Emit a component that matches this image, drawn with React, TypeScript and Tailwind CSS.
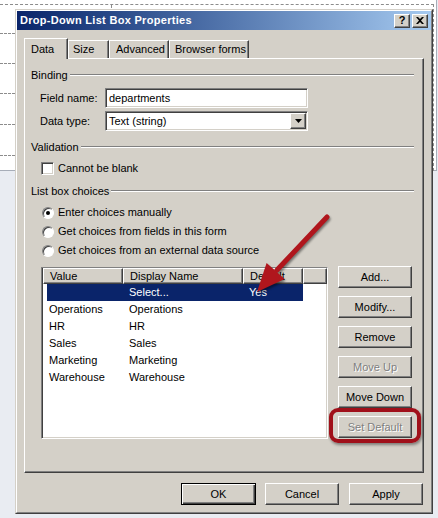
import type { ReactNode } from "react";

const raised =
  "border border-t-white border-l-white border-b-[#404040] border-r-[#404040] shadow-[inset_-1px_-1px_0_#808080]";
const sunken =
  "border border-t-[#808080] border-l-[#808080] border-b-white border-r-white shadow-[inset_1px_1px_0_#404040,inset_-1px_-1px_0_#d4d0c8]";

const rows: [string, string, string][] = [
  ["", "Select...", "Yes"],
  ["Operations", "Operations", ""],
  ["HR", "HR", ""],
  ["Sales", "Sales", ""],
  ["Marketing", "Marketing", ""],
  ["Warehouse", "Warehouse", ""],
];

function Group({ label, className = "" }: { label: string; className?: string }) {
  return (
    <div className={`ml-[6px] mr-[9px] flex h-[14px] items-center gap-[2px] ${className}`}>
      <span>{label}</span>
      <div className="h-[2px] flex-1 border-t border-b border-t-[#808080] border-b-white" />
    </div>
  );
}

function Btn({ children, disabled, className = "" }: { children: ReactNode; disabled?: boolean; className?: string }) {
  return (
    <button
      type="button"
      className={`flex h-[22px] w-[74px] items-center justify-center bg-[#d4d0c8] ${raised} ${
        disabled ? "text-[#808080] [text-shadow:1px_1px_0_#fff]" : ""
      } ${className}`}
    >
      {children}
    </button>
  );
}

function Radio({ checked, label }: { checked?: boolean; label: string }) {
  return (
    <div className="ml-[17px] flex h-[19px] items-center gap-[4px]">
      <span className="flex h-[12px] w-[12px] items-center justify-center rounded-full border border-t-[#808080] border-l-[#808080] border-b-white border-r-white bg-white shadow-[inset_1px_1px_0_#404040]">
        {checked && <span className="h-[4px] w-[4px] rounded-full bg-black" />}
      </span>
      <span>{label}</span>
    </div>
  );
}

function Tab({ label, active, className = "" }: { label: string; active?: boolean; className?: string }) {
  if (active)
    return (
      <div
        className={`relative z-10 mb-[-1px] flex h-[21px] items-start border-t border-l border-r border-t-white border-l-white border-r-[#404040] bg-[#d4d0c8] pt-[4px] shadow-[inset_-1px_0_0_#808080] ${className}`}
      >
        {label}
      </div>
    );
  return (
    <div
      className={`flex h-[18px] items-start border-t border-l border-r border-t-white border-l-white border-r-[#404040] bg-[#d4d0c8] pt-[2px] shadow-[inset_-1px_0_0_#808080] ${className}`}
    >
      {label}
    </div>
  );
}

export default function App() {
  return (
    <div className="relative h-[518px] w-[438px] overflow-hidden bg-[#e9ecf2] font-['Liberation_Sans',Arial,sans-serif] text-[11px] leading-[13px] text-black">
      {/* form canvas behind the dialog */}
      <div className="relative h-[171px] w-[437px] border-r border-b border-[#a7adb8] bg-white">
        <div className="absolute left-0 top-[4px] w-[434px] border-t border-dashed border-[#8c8c8c]" />
        <div className="absolute left-[111px] top-[4px] h-[4px] border-l border-[#8c8c8c]" />
        <div className="absolute left-[433px] top-[4px] h-[167px] border-l border-dashed border-[#8c8c8c]" />
        <div className="absolute left-0 top-[33px] w-[15px] border-t border-dashed border-[#8c8c8c]" />
        <div className="absolute left-0 top-[63px] w-[15px] border-t border-dashed border-[#8c8c8c]" />
        <div className="absolute left-0 top-[93px] w-[15px] border-t border-dashed border-[#8c8c8c]" />
        <div className="absolute left-0 top-[124px] w-[15px] border-t border-dashed border-[#8c8c8c]" />
        <div className="absolute left-0 top-[155px] w-[15px] border-t border-dashed border-[#8c8c8c]" />
      </div>

      {/* dialog window */}
      <div className="absolute left-[15px] top-[9px] h-[505px] w-[418px] border border-t-[#d4d0c8] border-l-[#d4d0c8] border-b-[#404040] border-r-[#404040]">
        <div className="flex h-full flex-col border border-t-white border-l-white border-b-[#808080] border-r-[#808080] bg-[#d4d0c8]">
          <div className="flex h-[19px] items-center bg-linear-to-r from-[#0a246a] to-[#a6caf0] pl-[3px] pr-[3px]">
            <span className="flex-1 font-bold tracking-[0.3px] text-white">Drop-Down List Box Properties</span>
            <span className={`flex h-[14px] w-[16px] items-center justify-center bg-[#d4d0c8] text-[11px] font-bold ${raised}`}>
              ?
            </span>
            <span className={`ml-[2px] flex h-[14px] w-[16px] items-center justify-center bg-[#d4d0c8] ${raised}`}>
              <svg width="8" height="7" viewBox="0 0 8 7">
                <path d="M0 0h2l2 2 2-2h2L5 3.5 8 7H6L4 5 2 7H0l3-3.5z" fill="#000" />
              </svg>
            </span>
          </div>

          <div className="px-[7px] pt-[7px]">
            <div className="flex h-[21px] items-end">
              <Tab label="Data" active className="w-[44px] pl-[6px]" />
              <Tab label="Size" className="w-[41px] pl-[4px]" />
              <Tab label="Advanced" className="w-[60px] pl-[6px]" />
              <Tab label="Browser forms" className="w-[80px] pl-[5px]" />
            </div>

            <div className="flex h-[415px] flex-col border border-t-white border-l-white border-b-[#404040] border-r-[#404040] shadow-[inset_-1px_-1px_0_#808080]">
              <Group label="Binding" className="mt-[9px]" />
              <div className="ml-[15px] mt-[6px] flex h-[20px] items-center">
                <span className="w-[65px]">Field name:</span>
                <div className={`flex h-[20px] w-[203px] items-center bg-white pl-[3px] ${sunken}`}>departments</div>
              </div>
              <div className="ml-[15px] mt-[3px] flex h-[20px] items-center">
                <span className="w-[65px]">Data type:</span>
                <div className={`flex h-[20px] w-[203px] items-center bg-white pl-[3px] ${sunken}`}>
                  <span className="flex-1">Text (string)</span>
                  <span className={`mr-[1px] flex h-[16px] w-[16px] items-center justify-center bg-[#d4d0c8] ${raised}`}>
                    <svg width="7" height="4" viewBox="0 0 7 4">
                      <path d="M0 0h7L3.5 4z" fill="#000" />
                    </svg>
                  </span>
                </div>
              </div>

              <Group label="Validation" className="mt-[9px]" />
              <div className="ml-[16px] mt-[7px] flex h-[14px] items-center gap-[4px]">
                <span className={`h-[13px] w-[13px] bg-white ${sunken}`} />
                <span>Cannot be blank</span>
              </div>

              <Group label="List box choices" className="mt-[9px]" />
              <div className="mt-[5px]">
                <Radio checked label="Enter choices manually" />
                <Radio label="Get choices from fields in this form" />
                <Radio label="Get choices from an external data source" />
              </div>

              <div className="ml-[16px] mr-[9px] mt-[6px] flex gap-[10px]">
                <div className={`mt-[1px] h-[172px] w-[287px] bg-white ${sunken}`}>
                  <div className="flex h-[16px] pl-[1px]">
                    {[
                      ["Value", "w-[80px]"],
                      ["Display Name", "w-[120px]"],
                      ["Default", "w-[60px]"],
                      ["", "flex-1"],
                    ].map(([h, w], i) => (
                      <div key={i} className={`flex items-center bg-[#d4d0c8] pl-[6px] ${w} ${raised}`}>
                        {h}
                      </div>
                    ))}
                  </div>
                  <div className="pl-[5px]">
                    {rows.map((r, i) => (
                      <div key={i} className={`flex h-[17px] w-[256px] items-center ${i === 0 ? "bg-[#0a246a] text-white" : ""}`}>
                        <span className="w-[76px] pl-[2px]">{r[0]}</span>
                        <span className="w-[120px] pl-[6px]">{r[1]}</span>
                        <span className="w-[60px] pl-[6px]">{r[2]}</span>
                      </div>
                    ))}
                  </div>
                </div>
                <div className="flex flex-col gap-[8px]">
                  <Btn>Add...</Btn>
                  <Btn>Modify...</Btn>
                  <Btn>Remove</Btn>
                  <Btn disabled>Move Up</Btn>
                  <Btn>Move Down</Btn>
                  <Btn disabled>Set Default</Btn>
                </div>
              </div>
            </div>

            <div className="mt-[10px] flex justify-end pr-[1px]">
              <button
                type="button"
                className="flex h-[22px] w-[75px] items-center justify-center border border-black bg-[#d4d0c8] shadow-[inset_1px_1px_0_#fff,inset_-1px_-1px_0_#404040,inset_-2px_-2px_0_#808080]"
              >
                OK
              </button>
              <Btn className="ml-[9px]">Cancel</Btn>
              <Btn className="ml-[10px]">Apply</Btn>
            </div>
          </div>
        </div>
      </div>

      {/* annotation: arrow and highlight */}
      <svg
        className="pointer-events-none absolute left-0 top-0 drop-shadow-[1px_2px_1px_rgba(0,0,0,0.45)]"
        width="438"
        height="518"
      >
        <line x1="327" y1="217" x2="277" y2="270" stroke="#b0161d" strokeWidth="5" strokeLinecap="round" />
        <polygon points="257,292 266.6,263.1 284.6,279.1" fill="#b0161d" />
      </svg>
      <div className="pointer-events-none absolute left-[329px] top-[408px] h-[35px] w-[92px] rounded-[9px] border-[4px] border-[#a0101a] shadow-[1px_2px_3px_rgba(0,0,0,0.4)]" />
    </div>
  );
}
